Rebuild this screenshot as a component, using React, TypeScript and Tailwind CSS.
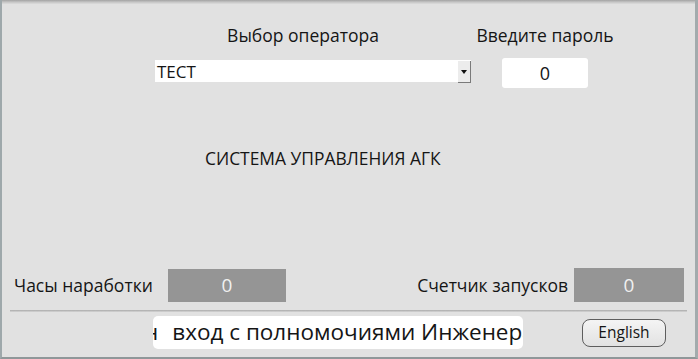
import React from 'react';

const font = { fontFamily: '"Open Sans", "Noto Sans", sans-serif' };

export default function App() {
  return (
    <div
      style={font}
      className="w-[698px] h-[359px] bg-[#e1e1e1] flex flex-col border-l-2 border-r-[3px] border-b-2 border-l-[#9ea8ab] border-r-[#a3abad] border-b-[#8f9799] text-[#151515] overflow-hidden"
    >
      {/* top strip */}
      <div className="h-[4px] bg-gradient-to-b from-[#a2a2a2] via-[#c4c4c4] to-[#dcdcdc]" />

      {/* labels */}
      <div className="mt-[21px] flex pl-[153px] h-[20px] items-center">
        <div className="w-[316px] flex justify-center pr-[20px] text-[17.5px] whitespace-nowrap">Выбор оператора</div>
        <div className="ml-[31px] w-[86px] flex justify-center text-[17.5px] whitespace-nowrap">Введите пароль</div>
      </div>

      {/* inputs */}
      <div className="mt-[13px] flex pl-[153px] h-[30px] items-start">
        <div className="mt-[2px] w-[316px] h-[22px] bg-white flex items-center relative">
          <span className="pl-[2px] text-[17px] leading-none">ТЕСТ</span>
          <div className="ml-auto w-[13px] h-[22px] mt-[2px] bg-[#ececec] border-r border-b border-[#7a7a7a] flex items-center justify-center">
            <div className="w-0 h-0 border-l-[3px] border-r-[3px] border-t-[4px] border-l-transparent border-r-transparent border-t-[#111]" />
          </div>
        </div>
        <div className="ml-[31px] w-[86px] h-[30px] bg-white rounded-[3px] flex items-center justify-center text-[18px]">0</div>
      </div>

      {/* title */}
      <div className="mt-[60px] h-[20px] flex items-center pl-[203px] text-[17.4px] whitespace-nowrap">
        СИСТЕМА УПРАВЛЕНИЯ АГК
      </div>

      {/* counters */}
      <div className="mt-[100px] h-[34px] flex items-center">
        <span className="ml-[12px] w-[154px] text-[17.5px] whitespace-nowrap">Часы наработки</span>
        <div className="w-[118px] h-[33px] bg-[#959595] text-[#f0f0f0] text-[19px] flex items-center justify-center">0</div>
        <span className="w-[282px] text-right text-[17.5px] whitespace-nowrap">Счетчик запусков</span>
        <div className="ml-[6px] w-[110px] h-[34px] bg-[#959595] text-[#f0f0f0] text-[19px] flex items-center justify-center">0</div>
      </div>

      {/* separator */}
      <div className="mt-[8px] mx-[8px] h-[2px] bg-gradient-to-b from-[#a9a9a9] to-[#d6d6d6]" />

      {/* bottom bar: scrolling status line */}
      <div className="mt-[4px] flex items-center h-[33px]">
        <div className="ml-[151px] w-[370px] h-[33px] bg-white rounded-[5px] overflow-hidden flex items-center text-[22.5px] leading-none whitespace-nowrap">
          <span className="ml-[-9px] shrink-0">н</span>
          <span className="ml-[14px] shrink-0">вход с полномочиями Инженера</span>
        </div>
        <button
          style={font}
          className="ml-[59px] w-[84px] h-[28px] rounded-[8px] border-[1.5px] border-[#5e5e5e] bg-gradient-to-b from-[#f4f4f4] to-[#e2e2e2] text-[15.5px] text-[#151515] flex items-center justify-center"
        >
          English
        </button>
      </div>
    </div>
  );
}
